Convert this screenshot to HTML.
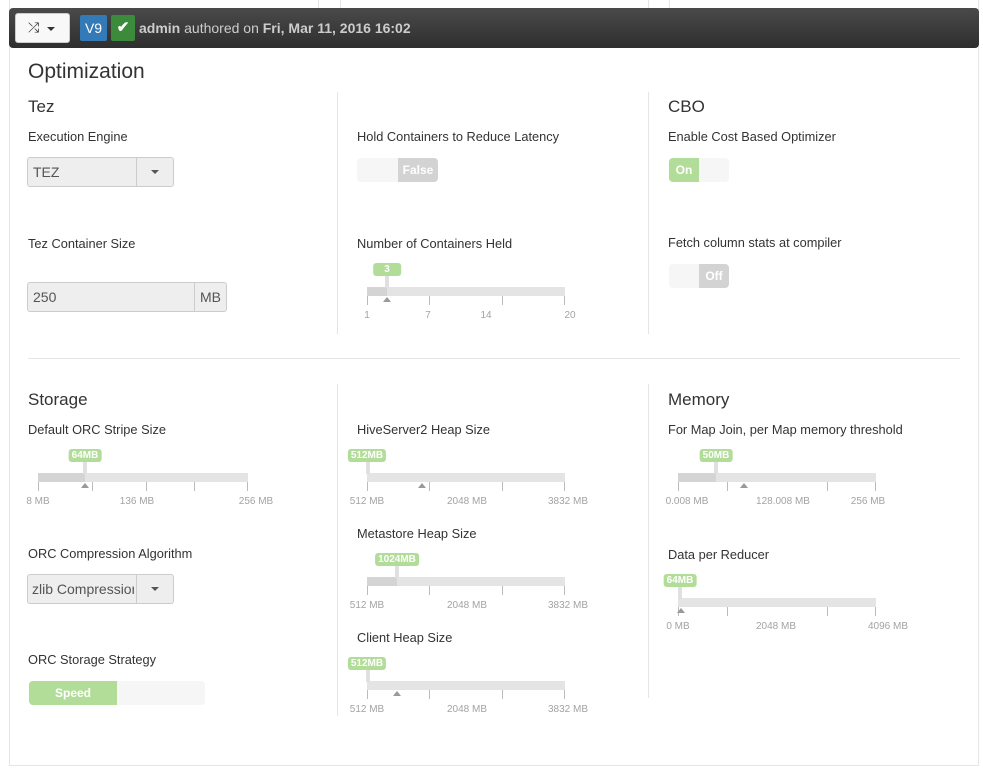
<!DOCTYPE html>
<html><head><meta charset="utf-8"><style>
*{box-sizing:border-box;margin:0;padding:0}
body{width:983px;height:772px;background:#fff;font-family:"Liberation Sans",Arial,sans-serif;color:#333;position:relative;overflow:hidden}
.a{position:absolute}
.lbl{position:absolute;font-size:12.8px;color:#333;white-space:nowrap}
.h{position:absolute;font-size:17px;color:#333}
.track{position:absolute;height:9px;background:#e4e4e4}
.fill{position:absolute;height:9px;background:#d4d4d4;top:0;left:0}
.tk{position:absolute;width:1px;height:9px;background:#bbb}
.tl{position:absolute;font-size:10px;color:#a3a3a3;white-space:nowrap;transform:translateX(-50%)}
.bub{position:absolute;height:13px;line-height:13px;background:#b2dd99;color:#fff;font-size:10px;font-weight:bold;padding:0 3px;border-radius:3px;transform:translateX(-50%);white-space:nowrap}
.hd{position:absolute;width:4px;background:#e0e0e0;transform:translateX(-50%)}
.tri{position:absolute;width:0;height:0;border-left:4px solid transparent;border-right:4px solid transparent;border-bottom:5px solid #999;transform:translateX(-50%)}
.sw{position:absolute;width:60px;height:24px;border-radius:4px;background:#f6f6f6;overflow:hidden}
.sw span{position:absolute;top:0;width:30px;height:24px;line-height:24px;text-align:center;color:#fff;font-weight:bold;font-size:12px}
.vl{position:absolute;width:1px;background:#e5e5e5}
</style></head><body>
<div class="vl" style="left:9px;top:0;height:766px"></div>
<div class="vl" style="left:978px;top:0;height:766px"></div>
<div class="a" style="left:9px;top:765px;width:970px;height:1px;background:#e5e5e5"></div>
<div class="vl" style="left:318px;top:0;height:8px"></div>
<div class="vl" style="left:340px;top:0;height:8px"></div>
<div class="vl" style="left:648px;top:0;height:8px"></div>
<div class="vl" style="left:669px;top:0;height:8px"></div>
<div class="a" style="left:9px;top:8px;width:970px;height:40px;background:linear-gradient(#4a4a4a,#2e2e2e);border-radius:4px"></div>
<div class="a" style="left:15px;top:13px;width:55px;height:30px;background:#f8f8f8;border:1px solid #ccc;border-radius:3px"></div>
<div class="a" style="left:28px;top:19px;font-size:14px;color:#333">⤮</div>
<div class="a" style="left:47px;top:27px;border-left:4px solid transparent;border-right:4px solid transparent;border-top:4px solid #333"></div>
<div class="a" style="left:80px;top:15px;width:27px;height:26px;background:#337ab7;border-radius:2px;color:#fff;font-size:14px;text-align:center;line-height:26px">V9</div>
<div class="a" style="left:111px;top:15px;width:24px;height:26px;background:#3c8a3c;border-radius:2px;color:#fff;font-size:15px;text-align:center;line-height:26px;font-weight:bold">✔</div>
<div class="a" style="left:139px;top:20px;font-size:14px;color:#ccc;white-space:nowrap"><b>admin</b> authored on <b>Fri, Mar 11, 2016 16:02</b></div>

<div class="a" style="left:28px;top:60px;font-size:21px;color:#333">Optimization</div>
<div class="h" style="left:28px;top:97px">Tez</div>
<div class="h" style="left:668px;top:97px">CBO</div>
<div class="vl" style="left:337px;top:92px;height:242px"></div>
<div class="vl" style="left:648px;top:92px;height:242px"></div>
<div class="a" style="left:28px;top:358px;width:932px;height:1px;background:#e5e5e5"></div>
<div class="vl" style="left:337px;top:384px;height:332px"></div>
<div class="vl" style="left:648px;top:384px;height:314px"></div>

<div class="lbl" style="left:28px;top:129px">Execution Engine</div>
<div class="a" style="left:27px;top:157px;width:147px;height:30px;border:1px solid #ccc;border-radius:3px;background:#eee"></div>
<div class="a" style="left:136px;top:158px;width:1px;height:28px;background:#ccc"></div>
<div class="a" style="left:33px;top:164px;font-size:14px;color:#555">TEZ</div>
<div class="a" style="left:151px;top:170px;border-left:4px solid transparent;border-right:4px solid transparent;border-top:4px solid #555"></div>

<div class="lbl" style="left:28px;top:236px">Tez Container Size</div>
<div class="a" style="left:27px;top:282px;width:200px;height:30px;border:1px solid #ccc;border-radius:3px;background:#eee"></div>
<div class="a" style="left:194px;top:283px;width:1px;height:28px;background:#ccc"></div>
<div class="a" style="left:33px;top:289px;font-size:14px;color:#555">250</div>
<div class="a" style="left:200px;top:289px;font-size:14px;color:#555">MB</div>

<div class="lbl" style="left:357px;top:129px">Hold Containers to Reduce Latency</div>
<div class="sw" style="left:357px;top:158px;width:81px"><span style="left:41px;width:40px;background:#d3d3d3">False</span></div>
<div class="lbl" style="left:357px;top:236px">Number of Containers Held</div>
<div class="track" style="left:367px;top:287px;width:198px"><div class="fill" style="width:20px"></div></div>
<div class="tk" style="left:367px;top:296px"></div><div class="tk" style="left:429px;top:296px"></div><div class="tk" style="left:502px;top:296px"></div><div class="tk" style="left:564px;top:296px"></div>
<div class="tl" style="left:367px;top:310px">1</div><div class="tl" style="left:428px;top:310px">7</div><div class="tl" style="left:486px;top:310px">14</div><div class="tl" style="left:570px;top:310px">20</div>
<div class="hd" style="left:387px;top:276px;height:12px"></div>
<div class="bub" style="left:387px;top:263px;padding:0 11px">3</div>
<div class="tri" style="left:387px;top:297px"></div>

<div class="lbl" style="left:668px;top:129px">Enable Cost Based Optimizer</div>
<div class="sw" style="left:669px;top:158px"><span style="left:0;background:#b2dd99">On</span></div>
<div class="lbl" style="left:668px;top:235px">Fetch column stats at compiler</div>
<div class="sw" style="left:669px;top:264px"><span style="left:30px;background:#d3d3d3">Off</span></div>

<div class="h" style="left:28px;top:390px">Storage</div>
<div class="h" style="left:668px;top:390px">Memory</div>

<div class="lbl" style="left:28px;top:422px">Default ORC Stripe Size</div>
<div class="track" style="left:38px;top:473px;width:210px"><div class="fill" style="width:47px"></div></div>
<div class="tk" style="left:38px;top:482px"></div><div class="tk" style="left:92px;top:482px"></div><div class="tk" style="left:146px;top:482px"></div><div class="tk" style="left:194px;top:482px"></div><div class="tk" style="left:247px;top:482px"></div>
<div class="tl" style="left:38px;top:496px">8 MB</div><div class="tl" style="left:137px;top:496px">136 MB</div><div class="tl" style="left:256px;top:496px">256 MB</div>
<div class="hd" style="left:85px;top:462px;height:12px"></div>
<div class="bub" style="left:85px;top:449px">64MB</div>
<div class="tri" style="left:85px;top:483px"></div>

<div class="lbl" style="left:28px;top:546px">ORC Compression Algorithm</div>
<div class="a" style="left:27px;top:574px;width:147px;height:30px;border:1px solid #ccc;border-radius:3px;background:#eee"></div>
<div class="a" style="left:136px;top:575px;width:1px;height:28px;background:#ccc"></div>
<div class="a" style="left:32px;top:581px;font-size:14px;color:#555;width:102px;overflow:hidden;white-space:nowrap">zlib Compression</div>
<div class="a" style="left:151px;top:587px;border-left:4px solid transparent;border-right:4px solid transparent;border-top:4px solid #555"></div>

<div class="lbl" style="left:28px;top:652px">ORC Storage Strategy</div>
<div class="sw" style="left:29px;top:681px;width:176px"><span style="left:0;width:88px;background:#b2dd99">Speed</span></div>

<div class="lbl" style="left:357px;top:422px">HiveServer2 Heap Size</div>
<div class="track" style="left:367px;top:473px;width:198px"></div>
<div class="tk" style="left:367px;top:482px"></div><div class="tk" style="left:429px;top:482px"></div><div class="tk" style="left:502px;top:482px"></div><div class="tk" style="left:564px;top:482px"></div>
<div class="tl" style="left:367px;top:496px">512 MB</div><div class="tl" style="left:467px;top:496px">2048 MB</div><div class="tl" style="left:568px;top:496px">3832 MB</div>
<div class="hd" style="left:368px;top:462px;height:12px"></div>
<div class="bub" style="left:367px;top:449px">512MB</div>
<div class="tri" style="left:422px;top:483px"></div>

<div class="lbl" style="left:357px;top:526px">Metastore Heap Size</div>
<div class="track" style="left:367px;top:577px;width:198px"><div class="fill" style="width:30px"></div></div>
<div class="tk" style="left:367px;top:586px"></div><div class="tk" style="left:429px;top:586px"></div><div class="tk" style="left:502px;top:586px"></div><div class="tk" style="left:564px;top:586px"></div>
<div class="tl" style="left:367px;top:600px">512 MB</div><div class="tl" style="left:467px;top:600px">2048 MB</div><div class="tl" style="left:568px;top:600px">3832 MB</div>
<div class="hd" style="left:397px;top:566px;height:12px"></div>
<div class="bub" style="left:397px;top:553px">1024MB</div>

<div class="lbl" style="left:357px;top:630px">Client Heap Size</div>
<div class="track" style="left:367px;top:681px;width:198px"></div>
<div class="tk" style="left:367px;top:690px"></div><div class="tk" style="left:429px;top:690px"></div><div class="tk" style="left:502px;top:690px"></div><div class="tk" style="left:564px;top:690px"></div>
<div class="tl" style="left:367px;top:704px">512 MB</div><div class="tl" style="left:467px;top:704px">2048 MB</div><div class="tl" style="left:568px;top:704px">3832 MB</div>
<div class="hd" style="left:368px;top:670px;height:12px"></div>
<div class="bub" style="left:367px;top:657px">512MB</div>
<div class="tri" style="left:397px;top:691px"></div>

<div class="lbl" style="left:668px;top:422px">For Map Join, per Map memory threshold</div>
<div class="track" style="left:678px;top:473px;width:198px"><div class="fill" style="width:38px"></div></div>
<div class="tk" style="left:678px;top:482px"></div><div class="tk" style="left:727px;top:482px"></div><div class="tk" style="left:827px;top:482px"></div><div class="tk" style="left:875px;top:482px"></div>
<div class="tl" style="left:687px;top:496px">0.008 MB</div><div class="tl" style="left:783px;top:496px">128.008 MB</div><div class="tl" style="left:868px;top:496px">256 MB</div>
<div class="hd" style="left:716px;top:462px;height:12px"></div>
<div class="bub" style="left:716px;top:449px">50MB</div>
<div class="tri" style="left:744px;top:483px"></div>

<div class="lbl" style="left:668px;top:547px">Data per Reducer</div>
<div class="track" style="left:678px;top:598px;width:198px"></div>
<div class="tk" style="left:678px;top:607px"></div><div class="tk" style="left:727px;top:607px"></div><div class="tk" style="left:827px;top:607px"></div><div class="tk" style="left:875px;top:607px"></div>
<div class="tl" style="left:678px;top:621px">0 MB</div><div class="tl" style="left:776px;top:621px">2048 MB</div><div class="tl" style="left:888px;top:621px">4096 MB</div>
<div class="hd" style="left:680px;top:587px;height:12px"></div>
<div class="bub" style="left:680px;top:574px">64MB</div>
<div class="tri" style="left:681px;top:608px"></div>
</body></html>
